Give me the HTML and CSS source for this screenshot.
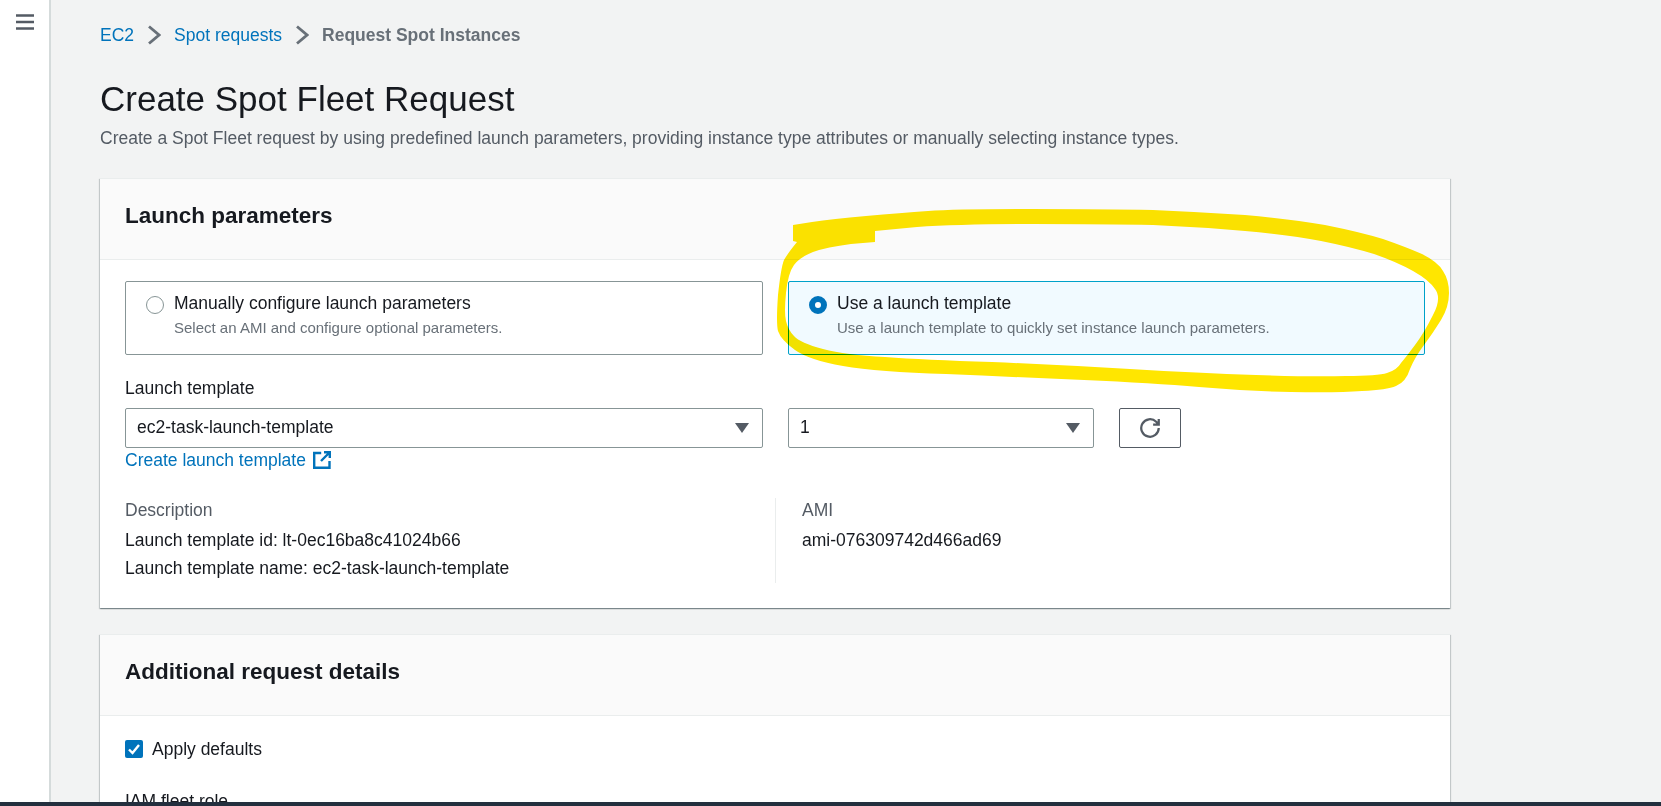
FILE: index.html
```html
<!DOCTYPE html>
<html lang="en">
<head>
<meta charset="utf-8">
<title>Create Spot Fleet Request</title>
<link rel="stylesheet" href="styles.css">
</head>
<body>
<div class="app">
  <div class="workspace">
    <aside class="sidebar">
      <svg class="menu-icon" viewBox="0 0 18 16" width="18" height="16"><path d="M0 1.500h18M0 8h18M0 14.500h18"/></svg>
    </aside>
    <main class="main">
      <nav class="crumbs">
        <a class="link">EC2</a>
        <svg class="chevron" viewBox="0 0 14 20" width="14" height="20"><path d="M2 1.500 12 10 2 18.500"/></svg>
        <a class="link">Spot requests</a>
        <svg class="chevron" viewBox="0 0 14 20" width="14" height="20"><path d="M2 1.500 12 10 2 18.500"/></svg>
        <span class="crumb-current">Request Spot Instances</span>
      </nav>
      <h1 class="title">Create Spot Fleet Request</h1>
      <p class="subtitle">Create a Spot Fleet request by using predefined launch parameters, providing instance type attributes or manually selecting instance types.</p>

      <section class="card">
        <header class="card-header"><h2 class="card-title">Launch parameters</h2></header>
        <div class="card-body">
          <div class="tiles">
            <div class="tile">
              <span class="radio"></span>
              <div>
                <div class="tile-label">Manually configure launch parameters</div>
                <div class="tile-desc">Select an AMI and configure optional parameters.</div>
              </div>
            </div>
            <div class="tile tile-on">
              <span class="radio radio-on"></span>
              <div>
                <div class="tile-label">Use a launch template</div>
                <div class="tile-desc">Use a launch template to quickly set instance launch parameters.</div>
              </div>
            </div>
          </div>
          <div class="field-label">Launch template</div>
          <div class="selects">
            <div class="select"><span>ec2-task-launch-template</span><i class="caret"></i></div>
            <div class="select-group">
              <div class="select select-fixed"><span>1</span><i class="caret"></i></div>
              <button class="icon-btn" type="button" aria-label="Refresh">
                <svg viewBox="0 0 16 16" width="20" height="20"><path d="M10.500 5.200H15V.7M15 8a7 7 0 1 1-2.050-4.950L15 5.200"/></svg>
              </button>
            </div>
          </div>
          <a class="link create-link">Create launch template
            <svg class="ext-icon" viewBox="0 0 18 18" width="18" height="18"><path d="M16.500 10v6.800H1.200V2h7M11 1.300h5.800V7M16.500 1.500 8 10"/></svg>
          </a>
          <div class="details">
            <div class="detail">
              <div class="detail-key">Description</div>
              <div class="detail-val">Launch template id: lt-0ec16ba8c41024b66</div>
              <div class="detail-val detail-tight">Launch template name: ec2-task-launch-template</div>
            </div>
            <div class="detail detail-split">
              <div class="detail-key">AMI</div>
              <div class="detail-val">ami-076309742d466ad69</div>
            </div>
          </div>
        </div>
      </section>

      <section class="card card-next">
        <header class="card-header"><h2 class="card-title">Additional request details</h2></header>
        <div class="card-body">
          <div class="check-row">
            <span class="checkbox">
              <svg viewBox="0 0 18 18" width="18" height="18"><path d="M4 9.500 7.500 13 14 5"/></svg>
            </span>
            <span>Apply defaults</span>
          </div>
          <div class="field-label field-iam">IAM fleet role</div>
        </div>
      </section>
    </main>
  </div>
  <div class="bottom-bar"></div>
</div>
<svg class="scribble" viewBox="0 0 1661 806" width="1661" height="806" aria-hidden="true">
  <path class="scribble-ink" d="M793 225L812 222Q832 219 866 216Q901 213 928 211Q956 209 1031 209Q1107 209 1153 210Q1199 212 1245 215Q1291 219 1325 225Q1360 232 1383 239Q1406 247 1422 254Q1438 262 1443 271Q1449 280 1449 293Q1449 307 1441 320Q1433 333 1424 345Q1415 357 1410 369Q1406 382 1396 386Q1387 390 1362 391Q1337 393 1291 392Q1245 391 1199 387Q1153 383 1084 380Q1015 377 946 374Q878 372 843 366Q809 360 795 350Q781 340 778 331Q776 323 778 295Q781 267 784 260Q788 253 797 242L793 241Z M875 231L917 227Q960 224 1033 224Q1107 224 1153 225Q1199 227 1245 231Q1291 235 1321 241Q1351 247 1374 254Q1397 262 1413 271Q1429 280 1435 289Q1442 298 1433 315Q1424 333 1415 345Q1406 357 1401 363Q1397 370 1387 373Q1378 376 1346 376Q1314 377 1256 375Q1199 373 1130 369Q1061 365 992 362Q924 360 885 357Q846 355 823 349Q800 343 794 336Q788 330 786 321Q784 313 786 293Q788 273 794 265Q800 257 813 252Q827 247 851 244L875 242Z"/>
</svg>
</body>
</html>
```
FILE: styles.css
```css
* { box-sizing: border-box; }
html, body { margin: 0; height: 100%; overflow: hidden; }
body {
  font-family: "Liberation Sans", Arial, sans-serif;
  font-size: 17.500px;
  line-height: 22px;
  color: #16191f;
  background: #f2f3f3;
}
.app { height: 806px; display: flex; flex-direction: column; }
.workspace { flex: 1; min-height: 0; display: flex; overflow: hidden; }
.bottom-bar { height: 4px; background: #232f3e; }

.sidebar {
  width: 51px;
  flex: none;
  background: #fff;
  border-right: 2px solid #d5dbdb;
  padding: 14px 0 0 16px;
}
.menu-icon { display: block; fill: none; stroke: #545b64; stroke-width: 2.600; }

.main { flex: 1; min-width: 0; padding: 24px 0 0 49px; }

.crumbs { display: flex; align-items: center; gap: 13px; height: 22px; }
.link { color: #0073bb; }
.chevron { fill: none; stroke: #687078; stroke-width: 2.800; }
.crumb-current { font-weight: 700; color: #687078; }

.title {
  margin: 33px 0 0;
  font-size: 35px;
  line-height: 40px;
  font-weight: 400;
  color: #16191f;
}
.subtitle { margin: 8px 0 0; color: #545b64; }

.card {
  width: 1350px;
  margin-top: 29px;
  background: #fff;
  border-top: 1px solid #eaeded;
  box-shadow: 0 1px 1px 0 rgba(0,28,36,.3), 1px 1px 1px 0 rgba(0,28,36,.15), -1px 1px 1px 0 rgba(0,28,36,.15);
}
.card-next { margin-top: 26px; }
.card-header {
  height: 81px;
  padding: 0 25px 6px;
  display: flex;
  align-items: center;
  background: #fafafa;
  border-bottom: 1px solid #eaeded;
}
.card-title { margin: 0; font-size: 22.500px; line-height: 26px; font-weight: 700; }
.card-body { padding: 21px 25px 25px; }

.tiles, .selects { display: grid; grid-template-columns: 638px 637px; column-gap: 25px; }
.tile {
  height: 74px;
  display: flex;
  gap: 10px;
  padding: 10px 20px;
  background: #fff;
  border: 1px solid #879596;
  border-radius: 2px;
}
.tile-on { background: #f1faff; border-color: #00a1c9; }
.radio {
  flex: none;
  width: 18px;
  height: 18px;
  margin-top: 4px;
  background: #fff;
  border: 1.500px solid #879596;
  border-radius: 50%;
}
.radio-on { border: 6px solid #0073bb; }
.tile-desc { font-size: 15px; line-height: 20px; margin-top: 4px; color: #687078; }

.field-label { margin-top: 22px; }
.selects { margin-top: 9px; }
.select-group { display: flex; gap: 25px; }
.select {
  height: 40px;
  display: flex;
  align-items: center;
  justify-content: space-between;
  padding: 0 13px 2px 11px;
  background: #fff;
  border: 1px solid #879596;
  border-radius: 2px;
}
.select-fixed { flex: none; width: 306px; }
.caret {
  width: 0;
  height: 0;
  margin-top: 2px;
  border-left: 7px solid transparent;
  border-right: 7px solid transparent;
  border-top: 10px solid #545b64;
}
.icon-btn {
  flex: none;
  width: 62px;
  height: 40px;
  padding: 0;
  display: flex;
  align-items: center;
  justify-content: center;
  background: #fff;
  border: 1px solid #545b64;
  border-radius: 2px;
}
.icon-btn svg { fill: none; stroke: #545b64; stroke-width: 1.800; }
.create-link { display: flex; align-items: center; gap: 7px; margin-top: 1px; height: 22px; }
.ext-icon { fill: none; stroke: #0073bb; stroke-width: 2.400; }

.details { display: grid; grid-template-columns: 650px 1fr; margin-top: 27px; height: 85px; }
.detail-split { border-left: 1px solid #eaeded; padding-left: 26px; }
.detail-key { color: #545b64; margin-top: 1px; }
.detail-val { margin-top: 8px; }
.detail-tight { margin-top: 6px; }

.check-row { display: flex; align-items: center; gap: 9px; height: 22px; margin-top: 1px; }
.checkbox {
  width: 18px;
  height: 18px;
  background: #0073bb;
  border-radius: 2px;
}
.checkbox svg { display: block; fill: none; stroke: #fff; stroke-width: 2.400; }
.field-iam { margin-top: 30px; }

.scribble { position: absolute; left: 0; top: 0; pointer-events: none; mix-blend-mode: multiply; }
.scribble-ink { fill: #ffe600; fill-rule: evenodd; }
```
